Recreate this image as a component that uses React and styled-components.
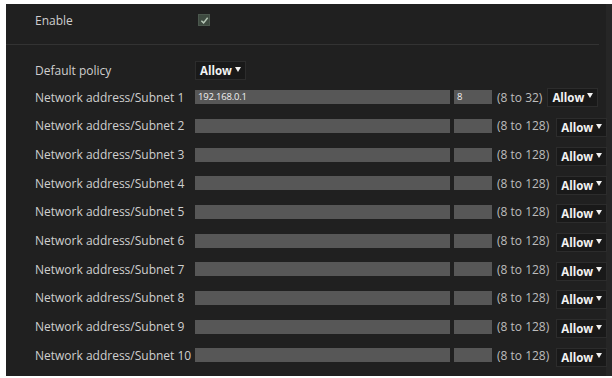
import React from "react";
import styled, { createGlobalStyle } from "styled-components";

const Global = createGlobalStyle`
  html, body {
    margin: 0;
    padding: 0;
    background: #ffffff;
  }
  body {
    font-family: "Open Sans", "Liberation Sans", sans-serif;
  }
`;

const Page = styled.div`
  width: 612px;
  height: 378px;
  padding: 4px 0 2px 6px;
  box-sizing: border-box;
`;

const Panel = styled.div`
  height: 100%;
  background: #202020;
  padding-left: 29px;
  box-sizing: border-box;
  color: #cfcfcf;
  font-size: 12px;
  border-right: 6px solid #262626;
`;

const Row = styled.div`
  display: flex;
  align-items: center;
  height: ${(p) => p.h || 28.67}px;
`;

const TopRow = styled.div`
  display: flex;
  align-items: center;
  height: 32px;
  margin-bottom: 8px;
`;

const Label = styled.div`
  width: 160px;
  flex-shrink: 0;
  white-space: nowrap;
`;

const Divider = styled.div`
  height: 1px;
  background: #333333;
  margin: 0 7px 13px -29px;
`;

const Check = styled.div`
  width: 10px;
  height: 10px;
  margin-left: 3px;
  background: #3e4a40;
  border: 1px solid #4b574d;
  display: flex;
  align-items: center;
  justify-content: center;
`;

const Input = styled.div`
  width: ${(p) => p.w}px;
  flex-shrink: 0;
  height: 14px;
  background: #575757;
  color: #f0f0f0;
  font-size: 9.5px;
  line-height: 14px;
  padding-left: 3px;
  box-sizing: border-box;
  margin-right: 4px;
  letter-spacing: -0.2px;
`;

const Range = styled.span`
  flex-shrink: 0;
  color: #bdbdbd;
  margin-left: 1px;
  margin-right: ${(p) => p.gap}px;
  white-space: nowrap;
`;

const Select = styled.div`
  flex-shrink: 0;
  display: flex;
  align-items: center;
  gap: 3px;
  height: 17px;
  padding: 0 4px;
  background: #191919;
  border: 1px solid #2c2c2c;
  color: #f2f2f2;
  font-weight: 700;
  font-size: 11.5px;
  margin-top: ${(p) => p.drop || 0}px;
  &::after {
    content: "";
    border-left: 3px solid transparent;
    border-right: 3px solid transparent;
    border-top: 5px solid #f2f2f2;
    margin-top: -3px;
  }
`;

const subnets = Array.from({ length: 10 }, (_, i) => i + 1);

export default function App() {
  return (
    <Page>
      <Global />
      <Panel>
        <TopRow>
          <Label>Enable</Label>
          <Check>
            <svg width="9" height="9" viewBox="0 0 10 10">
              <path d="M1.5 5.2 L4 7.6 L8.5 2" fill="none" stroke="#b8c8b8" strokeWidth="1.6" />
            </svg>
          </Check>
        </TopRow>
        <Divider />
        <Row h={25}>
          <Label>Default policy</Label>
          <Select>Allow</Select>
        </Row>
        {subnets.map((n) => (
          <Row key={n}>
            <Label>Network address/Subnet {n}</Label>
            <Input w={255}>{n === 1 ? "192.168.0.1" : ""}</Input>
            <Input w={38}>{n === 1 ? "8" : ""}</Input>
            <Range gap={n === 1 ? 5 : 7}>{n === 1 ? "(8 to 32)" : "(8 to 128)"}</Range>
            <Select drop={n === 1 ? 0 : 4}>Allow</Select>
          </Row>
        ))}
      </Panel>
    </Page>
  );
}
